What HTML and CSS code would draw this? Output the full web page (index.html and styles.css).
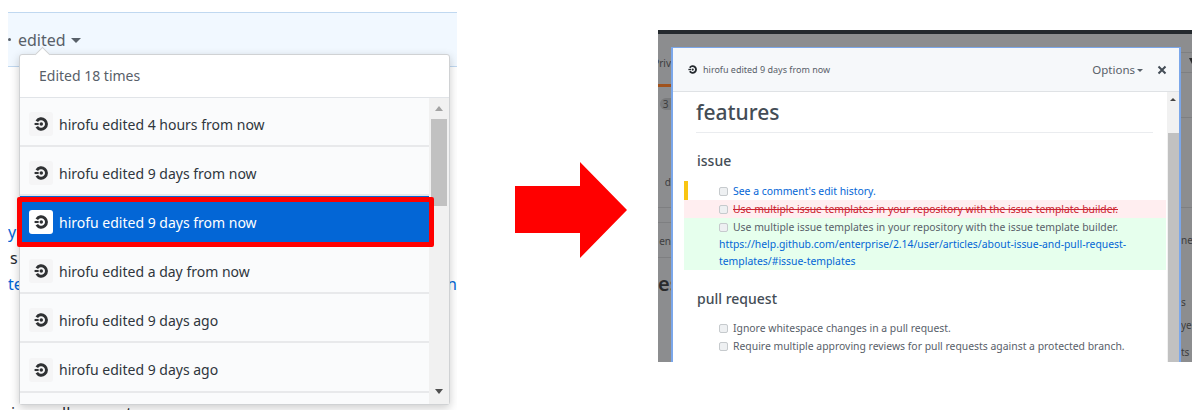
FILE: index.html
```html
<!DOCTYPE html>
<html lang="en">

<head>
    <meta charset="UTF-8">
    <meta name="viewport" content="width=device-width, initial-scale=1.0">
    <title>Edit history</title>
    <link rel="stylesheet" href="styles.css">
</head>

<body>
    <svg class="icon-defs" width="0" height="0">
        <symbol id="logo" viewBox="0 0 24 24">
            <circle cx="12.5" cy="12" r="3" fill="currentColor"></circle>
            <path d="M4.8 7.2A9 9 0 1 1 4.8 16.8" fill="none" stroke="currentColor" stroke-width="5"></path>
            <path d="M1 10.2h7v3.6H1z" fill="currentColor"></path>
        </symbol>
    </svg>

    <div class="slide">
        <!-- left screenshot: edit history dropdown -->
        <section class="shot-history">
            <div class="comment-band">
                <span class="edited-dot"></span>
                <span class="edited-label">edited</span>
                <span class="caret"></span>
            </div>
            <div class="page-text">
                <p class="link-text">y</p>
                <p class="plain-frag">s</p>
                <p class="text-split link-text"><span>te</span><span>n</span></p>
                <p class="cut-line">in a pull request</p>
            </div>

            <div class="history-menu">
                <div class="menu-notch"></div>
                <div class="menu-header">Edited 18 times</div>
                <div class="menu-body">
                    <ul class="menu-list">
                        <li class="menu-row">
                            <span class="avatar"><svg><use href="#logo"></use></svg></span>
                            hirofu edited 4 hours from now
                        </li>
                        <li class="menu-row">
                            <span class="avatar"><svg><use href="#logo"></use></svg></span>
                            hirofu edited 9 days from now
                        </li>
                        <li class="menu-row is-selected">
                            <span class="avatar"><svg><use href="#logo"></use></svg></span>
                            hirofu edited 9 days from now
                        </li>
                        <li class="menu-row">
                            <span class="avatar"><svg><use href="#logo"></use></svg></span>
                            hirofu edited a day from now
                        </li>
                        <li class="menu-row">
                            <span class="avatar"><svg><use href="#logo"></use></svg></span>
                            hirofu edited 9 days ago
                        </li>
                        <li class="menu-row">
                            <span class="avatar"><svg><use href="#logo"></use></svg></span>
                            hirofu edited 9 days ago
                        </li>
                    </ul>
                    <div class="menu-scrollbar">
                        <span class="arrow-up"></span>
                        <span class="menu-thumb"></span>
                        <span class="arrow-down"></span>
                    </div>
                </div>
                <div class="selected-outline"></div>
            </div>
        </section>

        <svg class="big-arrow" viewBox="0 0 112 96">
            <path d="M0 24H65V0L112 48L65 96V71H0Z" fill="#ff0000"></path>
        </svg>

        <!-- right screenshot: diff modal over the dimmed page -->
        <section class="shot-diff">
            <div class="dark-bar"></div>
            <div class="dimmed-page">
                <div class="strip strip-left">
                    <span class="frag frag-priv">Priv</span>
                    <span class="frag-rule"></span>
                    <span class="frag frag-count">3</span>
                    <span class="frag frag-d">d</span>
                    <span class="frag frag-en">en</span>
                    <span class="frag frag-es">es</span>
                </div>

                <div class="modal">
                    <div class="modal-header">
                        <svg class="modal-logo"><use href="#logo"></use></svg>
                        <span class="modal-title">hirofu edited 9 days from now</span>
                        <span class="modal-options">Options</span>
                        <span class="caret caret-small"></span>
                        <svg class="modal-close" viewBox="0 0 10 10">
                            <path d="M1.5 1.5L8.5 8.5M8.5 1.5L1.5 8.5" stroke="currentColor" stroke-width="2"></path>
                        </svg>
                    </div>
                    <div class="modal-body">
                        <div class="modal-content">
                            <h1>features</h1>
                            <h3>issue</h3>
                            <div class="diff-plain">
                                <div class="task-line"><span class="check"></span><a href="#">See a comment's edit history.</a></div>
                            </div>
                            <div class="diff-removed">
                                <div class="task-line"><span class="check"></span><s>Use multiple issue templates in your repository with the issue template builder.</s></div>
                            </div>
                            <div class="diff-added">
                                <div class="task-line"><span class="check"></span>Use multiple issue templates in your repository with the issue template builder.</div>
                                <a class="diff-url" href="#">https://help.github.com/enterprise/2.14/user/articles/about-issue-and-pull-request-</a>
                                <a class="diff-url" href="#">templates/#issue-templates</a>
                            </div>
                            <h3 class="pull-heading">pull request</h3>
                            <div class="task-list">
                                <div class="task-line"><span class="check"></span>Ignore whitespace changes in a pull request.</div>
                                <div class="task-line"><span class="check"></span>Require multiple approving reviews for pull requests against a protected branch.</div>
                            </div>
                        </div>
                        <div class="modal-scrollbar">
                            <span class="arrow-up arrow-small"></span>
                            <span class="modal-thumb"></span>
                        </div>
                    </div>
                </div>

                <div class="strip strip-right">
                    <span class="frag frag-filter"></span>
                    <span class="frag frag-ne">ne</span>
                    <span class="frag frag-s">s</span>
                    <span class="frag frag-ye">ye</span>
                    <span class="frag frag-ts">ts</span>
                </div>
            </div>
        </section>
    </div>
</body>

</html>
```
FILE: styles.css
```css
:root {
    --link: #0366d6;
    --muted: #586069;
    --heading: #444d56;
    --dim-rule: #7e7f81;
}

body {
    margin: 0;
    width: 1204px;
    height: 418px;
    overflow: hidden;
    background-color: #fff;
    font-family: "Noto Sans", "Open Sans", sans-serif;
}

.icon-defs {
    position: absolute;
}

.slide {
    display: flex;
    align-items: flex-start;
    padding-left: 8px;
}

/* left screenshot */
.shot-history {
    position: relative;
    flex: none;
    width: 449px;
    height: 398px;
    margin-top: 12px;
    overflow: hidden;
}

.comment-band {
    display: flex;
    align-items: center;
    box-sizing: border-box;
    height: 55px;
    background-color: #f1f8ff;
    border-top: 1px solid #c0d8f0;
    border-bottom: 1px solid #c0d8f0;
    color: var(--muted);
    font-size: 16px;
}

.edited-dot {
    width: 3px;
    height: 3px;
    margin: 0 7px 0 0;
    border-radius: 50%;
    background-color: var(--muted);
}

.caret {
    width: 0;
    height: 0;
    margin-left: 5px;
    margin-top: 2px;
    border-top: 5px solid var(--muted);
    border-left: 5px solid transparent;
    border-right: 5px solid transparent;
}

.caret-small {
    margin-left: 2px;
    margin-right: 14px;
    border-top-width: 3px;
    border-left-width: 3px;
    border-right-width: 3px;
}

.page-text {
    padding-top: 152px;
    color: #24292e;
    font-size: 16px;
    line-height: 26px;
}

.page-text p {
    margin: 0;
}

.page-text .plain-frag {
    padding-left: 2px;
}

.link-text {
    color: var(--link);
}

.text-split {
    display: flex;
    justify-content: space-between;
}

.page-text .cut-line {
    padding-left: 3px;
    margin-top: 103px;
}

.history-menu {
    position: absolute;
    top: 42px;
    left: 11px;
    box-sizing: border-box;
    width: 431px;
    height: 351px;
    background-color: #fff;
    border: 1px solid #d0d2d4;
    border-radius: 3px;
    box-shadow: 0 3px 10px rgba(0, 0, 0, 0.2);
}

.menu-notch {
    position: absolute;
    top: -6px;
    left: 17px;
    width: 10px;
    height: 10px;
    background-color: #fff;
    border-top: 1px solid #d0d2d4;
    border-left: 1px solid #d0d2d4;
    transform: rotate(45deg);
}

.menu-header {
    position: relative;
    box-sizing: border-box;
    height: 43px;
    padding: 0 19px;
    border-bottom: 1px solid #e1e4e8;
    color: var(--muted);
    font-size: 14px;
    line-height: 41px;
}

.menu-body {
    display: flex;
    height: 306px;
    overflow: hidden;
}

.menu-list {
    flex: 1;
    margin: 0;
    padding: 0;
    list-style: none;
    background-color: #fafbfc;
}

.menu-row {
    display: flex;
    align-items: center;
    gap: 6px;
    box-sizing: border-box;
    height: 49px;
    padding: 5px 0 0 9px;
    border-bottom: 2px solid #e8e9eb;
    color: #2f363d;
    font-size: 14px;
}

.menu-row:last-child {
    height: 50px;
}

.is-selected {
    background-color: var(--link);
    color: #fff;
}

.avatar {
    display: flex;
    align-items: center;
    justify-content: center;
    width: 24px;
    height: 24px;
    border-radius: 3px;
    background-color: #f5f5f6;
    color: #2f3133;
}

.is-selected .avatar {
    background-color: #fff;
}

.avatar svg {
    width: 14px;
    height: 14px;
}

.menu-scrollbar {
    display: flex;
    flex-direction: column;
    align-items: center;
    flex: none;
    width: 20px;
    background-color: #f1f1f1;
}

.arrow-up {
    width: 0;
    height: 0;
    margin-top: 8px;
    border-bottom: 5px solid #a3a3a3;
    border-left: 4px solid transparent;
    border-right: 4px solid transparent;
}

.arrow-down {
    width: 0;
    height: 0;
    margin-top: 183px;
    border-top: 5px solid #505050;
    border-left: 4px solid transparent;
    border-right: 4px solid transparent;
}

.menu-thumb {
    width: 16px;
    height: 87px;
    margin-top: 8px;
    background-color: #c1c1c1;
}

.selected-outline {
    position: absolute;
    top: 142px;
    left: -3px;
    box-sizing: border-box;
    width: 417px;
    height: 50px;
    border: 5px solid #ff0000;
    border-radius: 2px;
}

.big-arrow {
    flex: none;
    width: 112px;
    height: 96px;
    margin: 162px 31px 0 58px;
}

/* right screenshot */
.shot-diff {
    flex: none;
    width: 534px;
    height: 332px;
    margin-top: 30px;
    overflow: hidden;
    background-color: #8c8d8f;
}

.dark-bar {
    height: 4px;
    background-color: #24292e;
}

.dimmed-page {
    display: flex;
    height: 328px;
}

.strip {
    display: flex;
    flex-direction: column;
    flex: none;
    overflow: hidden;
    color: #3c3d3f;
    font-size: 10px;
    line-height: 12px;
    background-repeat: no-repeat;
    background-size: 100% 1px;
}

.strip-left {
    width: 13px;
    background-image: linear-gradient(var(--dim-rule), var(--dim-rule)), linear-gradient(var(--dim-rule), var(--dim-rule)), linear-gradient(var(--dim-rule), var(--dim-rule));
    background-position: 0 173px, 0 188px, 0 223px;
}

.strip-right {
    width: 11px;
    align-items: flex-start;
    background-image: linear-gradient(var(--dim-rule), var(--dim-rule)), linear-gradient(var(--dim-rule), var(--dim-rule)), linear-gradient(var(--dim-rule), var(--dim-rule)), linear-gradient(var(--dim-rule), var(--dim-rule));
    background-position: 0 18px, 0 38px, 0 83px, 0 173px;
}

.frag {
    display: block;
    white-space: nowrap;
}

.frag-priv {
    width: 13px;
    margin-top: 23px;
    overflow: hidden;
    direction: rtl;
}

.frag-rule {
    height: 3px;
    margin-top: 15px;
    background-color: #a0521c;
}

.frag-count {
    width: 11px;
    height: 12px;
    margin-top: 11px;
    margin-left: 2px;
    border-radius: 6px 0 0 6px;
    background-color: #7a7b7d;
    text-align: center;
}

.frag-d {
    margin-top: 66px;
    text-align: right;
}

.frag-en {
    margin-top: 47px;
    text-align: right;
}

.frag-es {
    margin-top: 25px;
    color: #2a2b2d;
    font-size: 20px;
    line-height: 24px;
    font-weight: 600;
}

.frag-filter {
    width: 0;
    height: 0;
    margin-top: 24px;
    margin-left: 8px;
    border-top: 6px solid #2a2b2d;
    border-left: 3px solid transparent;
    border-right: 3px solid transparent;
}

.frag-ne {
    margin-top: 170px;
}

.frag-s {
    margin-top: 50px;
}

.frag-ye {
    margin-top: 11px;
}

.frag-ts {
    margin-top: 15px;
}

.modal {
    flex: none;
    box-sizing: border-box;
    width: 510px;
    margin-top: 13px;
    background-color: #fff;
    border: solid #7ba7ea;
    border-width: 1px 2px 0 2px;
}

.modal-header {
    display: flex;
    align-items: center;
    box-sizing: border-box;
    height: 44px;
    padding-left: 15px;
    background-color: #f6f8fa;
    border-bottom: 1px solid #dfe2e5;
    color: var(--muted);
}

.modal-logo {
    width: 9px;
    height: 9px;
    margin-right: 6px;
    color: #24292e;
}

.modal-title {
    flex: 1;
    font-size: 9px;
}

.modal-options {
    font-size: 11.5px;
}

.modal-close {
    width: 10px;
    height: 10px;
    margin-right: 12px;
    color: #444d56;
}

.modal-body {
    display: flex;
    height: 270px;
    overflow: hidden;
}

.modal-content {
    flex: 1;
    padding-left: 11px;
    color: var(--muted);
    font-size: 10.4px;
}

.modal-content h1 {
    width: 457px;
    height: 41px;
    margin: 0 0 0 12px;
    box-sizing: border-box;
    border-bottom: 1px solid #eaecef;
    color: var(--heading);
    font-size: 21px;
    font-weight: 500;
    line-height: 40px;
}

.modal-content h3 {
    margin: 18px 0 10px 13px;
    color: var(--heading);
    font-size: 14px;
    font-weight: 500;
    line-height: 20px;
}

.modal-content a {
    color: var(--link);
    text-decoration: none;
}

.modal-content .pull-heading {
    margin-top: 19px;
    margin-bottom: 10px;
}

.diff-plain {
    height: 19px;
    box-sizing: border-box;
    border-left: 4px solid #f9c513;
}

.diff-plain .task-line {
    margin-left: 31px;
    padding-top: 1px;
}

.diff-removed,
.diff-added {
    width: 482px;
    box-sizing: border-box;
    padding-left: 35px;
}

.diff-removed {
    height: 18px;
    background-color: #ffeef0;
    color: #cb2431;
}

.diff-added {
    height: 52px;
    background-color: #e6ffed;
}

.diff-url {
    display: block;
    height: 17px;
    line-height: 17px;
}

.task-line {
    display: flex;
    align-items: center;
    height: 18px;
    white-space: nowrap;
}

.check {
    flex: none;
    box-sizing: border-box;
    width: 9px;
    height: 9px;
    margin-right: 5px;
    background-color: #eef0f2;
    border: 1px solid #c6cacd;
    border-radius: 2px;
}

.task-list {
    padding-left: 35px;
}

.modal-scrollbar {
    display: flex;
    flex-direction: column;
    align-items: center;
    flex: none;
    width: 12px;
    background-color: #f1f1f1;
}

.arrow-small {
    margin-top: 6px;
    border-bottom-width: 3px;
    border-left-width: 3px;
    border-right-width: 3px;
    border-bottom-color: #444;
}

.modal-thumb {
    flex: 1;
    width: 11px;
    margin-top: 32px;
    background-color: #c1c1c1;
}
```
